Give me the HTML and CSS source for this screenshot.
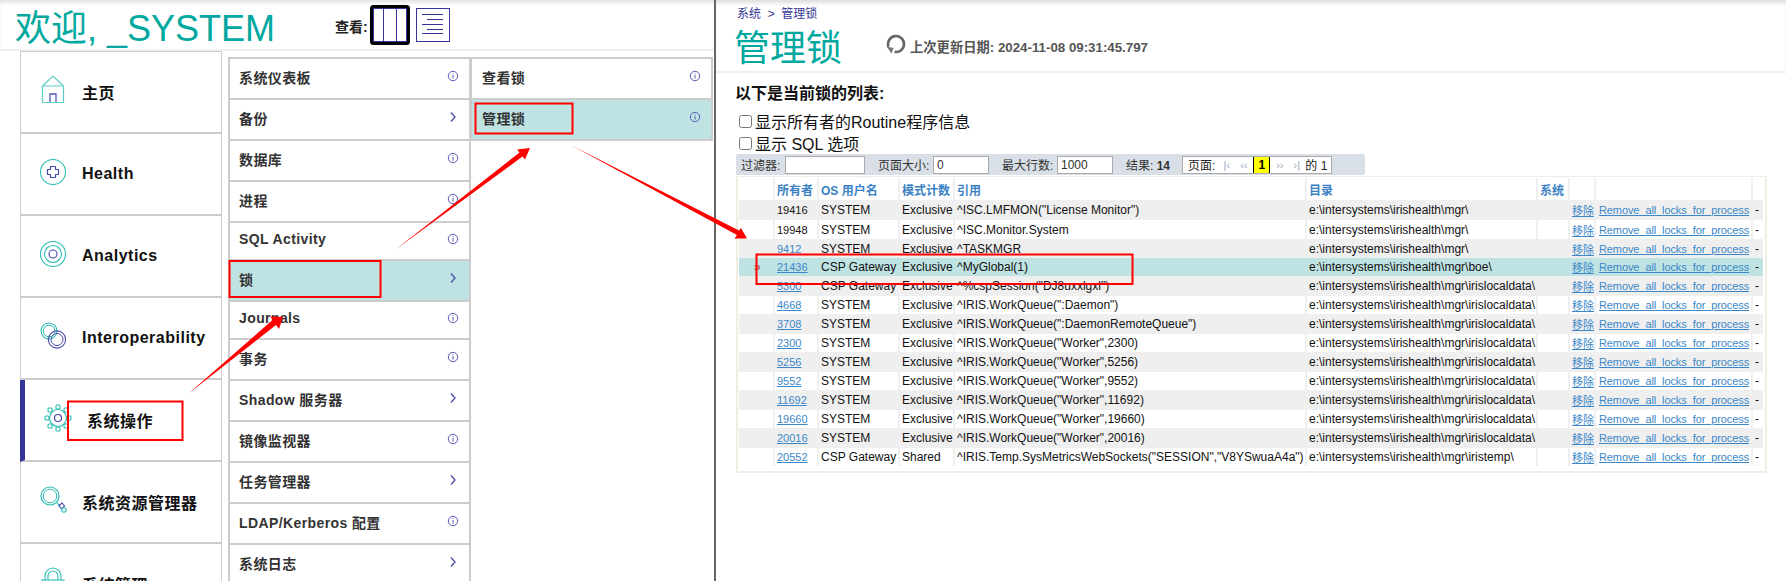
FILE: index.html
```html
<!DOCTYPE html>
<html lang="zh-CN">
<head>
    <meta charset="UTF-8">
    <title>管理锁</title>
    <link rel="stylesheet" href="styles.css">
</head>
<body>
<div class="page">
    <div class="portal">
        <div class="portal-head">
            <h1 class="welcome">欢迎, _SYSTEM</h1>
            <span class="view-label">查看:</span>
            <svg class="view-cols" width="40" height="40" viewBox="0 0 40 40">
                <rect x="1.5" y="1.5" width="37" height="37" rx="2" fill="#fff" stroke="#000" stroke-width="3"/>
                <rect x="3.5" y="3.5" width="33" height="33" fill="none" stroke="#333399"/>
                <path d="M13.5 4v32M26.5 4v32" stroke="#333399" fill="none"/>
            </svg>
            <svg class="view-rows" width="34" height="34" viewBox="0 0 34 34">
                <rect x=".5" y=".5" width="33" height="33" fill="#fff" stroke="#333399"/>
                <path d="M6 6.5h21M11 11.5h16M6 16.5h21M11 21.5h16M6 25.5h21" stroke="#333399" fill="none"/>
            </svg>
        </div>
        <div class="portal-body">
            <ul class="menu-main">
                <li class="main-item">
                    <svg class="main-icon" width="30" height="30" viewBox="0 0 30 30" fill="none">
                        <path d="M4 11.5 15 1 26 11.5M4.500 11h21v16.500h-21z" stroke="#5ccfc8" stroke-width="1.2"/>
                        <path d="M12 27v-8h6v8" stroke="#5555b5" stroke-width="1.3"/>
                    </svg>
                    <span>主页</span>
                </li>
                <li class="main-item">
                    <svg class="main-icon" width="30" height="30" viewBox="0 0 30 30" fill="none">
                        <circle cx="15" cy="15" r="12.500" stroke="#2cbdb5" stroke-width="1.1"/>
                        <path d="M12.500 9.500h5v3h3v5h-3v3h-5v-3h-3v-5h3z" stroke="#4a4aaa" stroke-width="1.2" stroke-linejoin="round"/>
                    </svg>
                    <span>Health</span>
                </li>
                <li class="main-item">
                    <svg class="main-icon" width="30" height="30" viewBox="0 0 30 30" fill="none">
                        <circle cx="15" cy="15" r="12.500" stroke="#2cbdb5" stroke-width="1.1"/>
                        <circle cx="15" cy="15" r="8.500" stroke="#2cbdb5" stroke-width="1.1"/>
                        <circle cx="15" cy="15" r="4" stroke="#4a4aaa" stroke-width="1.1"/>
                    </svg>
                    <span>Analytics</span>
                </li>
                <li class="main-item">
                    <svg class="main-icon" width="30" height="30" viewBox="0 0 30 30" fill="none">
                        <circle cx="11" cy="10" r="8" stroke="#2cbdb5" stroke-width="1.1"/>
                        <circle cx="11" cy="10" r="5.800" stroke="#2cbdb5" stroke-width="1"/>
                        <circle cx="19" cy="18.500" r="8.600" stroke="#4a4aaa" stroke-width="1.1"/>
                        <circle cx="19" cy="18.500" r="6" stroke="#4a4aaa" stroke-width="1"/>
                    </svg>
                    <span>Interoperability</span>
                </li>
                <li class="main-item main-active">
                    <svg class="main-icon" width="30" height="30" viewBox="0 0 30 30" fill="none">
                        <circle cx="15" cy="15" r="8.500" stroke="#2cbdb5" stroke-width="1.2"/>
                        <circle cx="15" cy="15" r="3.500" stroke="#4a4aaa" stroke-width="1.2"/>
                        <g fill="#fff" stroke="#2cbdb5" stroke-width="1.1">
                            <rect x="13" y="2" width="4" height="4" rx="1"/>
                            <rect x="13" y="24" width="4" height="4" rx="1"/>
                            <rect x="2" y="13" width="4" height="4" rx="1"/>
                            <rect x="24" y="13" width="4" height="4" rx="1"/>
                            <rect x="5" y="5" width="4" height="4" rx="1"/>
                            <rect x="21" y="5" width="4" height="4" rx="1"/>
                            <rect x="5" y="21" width="4" height="4" rx="1"/>
                            <rect x="21" y="21" width="4" height="4" rx="1"/>
                        </g>
                    </svg>
                    <span>系统操作</span>
                </li>
                <li class="main-item">
                    <svg class="main-icon" width="30" height="30" viewBox="0 0 30 30" fill="none">
                        <circle cx="12" cy="11" r="9" stroke="#2cbdb5" stroke-width="1.2"/>
                        <circle cx="12" cy="11" r="6.800" stroke="#2cbdb5" stroke-width="1"/>
                        <path d="M19 18 22 21" stroke="#2cbdb5" stroke-width="1.2"/>
                        <path d="M21 20.500 24 18l2.500 3-3 3z" stroke="#4a4aaa" stroke-width="1.1"/>
                        <circle cx="26" cy="25" r="2.200" stroke="#2cbdb5" stroke-width="1.1"/>
                    </svg>
                    <span>系统资源管理器</span>
                </li>
                <li class="main-item">
                    <svg class="main-icon" width="30" height="30" viewBox="0 0 30 30" fill="none">
                        <path d="M7 13V9a8 8 0 0 1 16 0v4M10 13V9a5 5 0 0 1 10 0v4" stroke="#2cbdb5" stroke-width="1.1"/>
                        <rect x="4" y="13" width="22" height="15" stroke="#2cbdb5" stroke-width="1.1"/>
                    </svg>
                    <span>系统管理</span>
                </li>
            </ul>
            <ul class="menu-sub">
                <li class="sub-item">系统仪表板<svg class="info"><use href="#i-info"/></svg></li>
                <li class="sub-item">备份<svg class="chev"><use href="#i-chev"/></svg></li>
                <li class="sub-item">数据库<svg class="info"><use href="#i-info"/></svg></li>
                <li class="sub-item">进程<svg class="info"><use href="#i-info"/></svg></li>
                <li class="sub-item sub-short">SQL Activity<svg class="info"><use href="#i-info"/></svg></li>
                <li class="sub-item sub-active">锁<svg class="chev"><use href="#i-chev"/></svg></li>
                <li class="sub-item sub-short">Journals<svg class="info"><use href="#i-info"/></svg></li>
                <li class="sub-item">事务<svg class="info"><use href="#i-info"/></svg></li>
                <li class="sub-item">Shadow 服务器<svg class="chev"><use href="#i-chev"/></svg></li>
                <li class="sub-item">镜像监视器<svg class="info"><use href="#i-info"/></svg></li>
                <li class="sub-item">任务管理器<svg class="chev"><use href="#i-chev"/></svg></li>
                <li class="sub-item">LDAP/Kerberos 配置<svg class="info"><use href="#i-info"/></svg></li>
                <li class="sub-item">系统日志<svg class="chev"><use href="#i-chev"/></svg></li>
            </ul>
            <ul class="menu-sub menu-third">
                <li class="sub-item">查看锁<svg class="info"><use href="#i-info"/></svg></li>
                <li class="sub-item sub-active">管理锁<svg class="info"><use href="#i-info"/></svg></li>
            </ul>
        </div>
    </div>

    <div class="panel">
        <div class="panel-head">
            <div class="crumbs">系统 &nbsp;&gt;&nbsp; 管理锁</div>
            <div class="title-row">
                <h1 class="panel-title">管理锁</h1>
                <svg class="refresh" width="22" height="20" viewBox="0 0 22 20" fill="none">
                    <path d="M9.600 17.900A8 8 0 1 0 3.500 12.700" stroke="#666" stroke-width="2.600"/>
                    <path d="M1.500 12.500 8.500 14 6.500 19.500z" fill="#777"/>
                </svg>
                <span class="updated">上次更新日期: 2024-11-08 09:31:45.797</span>
            </div>
        </div>
        <div class="panel-body">
            <h2 class="list-title">以下是当前锁的列表:</h2>
            <label class="check-row"><input type="checkbox">显示所有者的Routine程序信息</label>
            <label class="check-row"><input type="checkbox">显示 SQL 选项</label>
            <div class="filter-bar">
                <span class="fl-first">过滤器:</span><input class="fl-input fl-wide" type="text">
                <span class="fl-label">页面大小:</span><input class="fl-input" type="text" value="0">
                <span class="fl-label">最大行数:</span><input class="fl-input" type="text" value="1000">
                <span class="fl-label">结果: <b>14</b></span>
                <div class="pager">
                    <span class="pg-text">页面:</span>
                    <span class="pg-nav pg-a">|‹</span>
                    <span class="pg-nav">‹‹</span>
                    <span class="pg-cur">1</span>
                    <span class="pg-nav pg-c">››</span>
                    <span class="pg-nav">›|</span>
                    <span class="pg-text">的 1</span>
                </div>
            </div>
            <div class="table-box">
                <table class="locks">
                    <colgroup>
                        <col class="c-mark"><col class="c-owner"><col class="c-user"><col class="c-mode">
                        <col class="c-ref"><col class="c-dir"><col class="c-sys"><col class="c-rm">
                        <col class="c-rmall"><col class="c-end">
                    </colgroup>
                    <thead>
                        <tr><th></th><th>所有者</th><th>OS 用户名</th><th>模式计数</th><th>引用</th><th>目录</th><th>系统</th><th></th><th></th><th></th></tr>
                    </thead>
                    <tbody>
                        <tr class="r-odd"><td></td><td class="num">19416</td><td>SYSTEM</td><td>Exclusive</td><td>^ISC.LMFMON("License Monitor")</td><td>e:\intersystems\irishealth\mgr\</td><td></td><td class="rm"><a href="#">移除</a></td><td><a class="rm-all" href="#">Remove_all_locks_for_process</a></td><td>-</td></tr>
                        <tr class="r-tall"><td></td><td class="num">19948</td><td>SYSTEM</td><td>Exclusive</td><td>^ISC.Monitor.System</td><td>e:\intersystems\irishealth\mgr\</td><td></td><td class="rm"><a href="#">移除</a></td><td><a class="rm-all" href="#">Remove_all_locks_for_process</a></td><td>-</td></tr>
                        <tr class="r-gray"><td></td><td class="num"><a href="#">9412</a></td><td>SYSTEM</td><td>Exclusive</td><td>^TASKMGR</td><td>e:\intersystems\irishealth\mgr\</td><td></td><td class="rm"><a href="#">移除</a></td><td><a class="rm-all" href="#">Remove_all_locks_for_process</a></td><td>-</td></tr>
                        <tr class="r-sel"><td class="mark">»</td><td class="num"><a href="#">21436</a></td><td>CSP Gateway</td><td>Exclusive</td><td>^MyGlobal(1)</td><td>e:\intersystems\irishealth\mgr\boe\</td><td></td><td class="rm"><a href="#">移除</a></td><td><a class="rm-all" href="#">Remove_all_locks_for_process</a></td><td>-</td></tr>
                        <tr class="r-odd"><td></td><td class="num"><a href="#">5300</a></td><td>CSP Gateway</td><td>Exclusive</td><td>^%cspSession("DJ8uxxlgxl")</td><td>e:\intersystems\irishealth\mgr\irislocaldata\</td><td></td><td class="rm"><a href="#">移除</a></td><td><a class="rm-all" href="#">Remove_all_locks_for_process</a></td><td>-</td></tr>
                        <tr><td></td><td class="num"><a href="#">4668</a></td><td>SYSTEM</td><td>Exclusive</td><td>^IRIS.WorkQueue(":Daemon")</td><td>e:\intersystems\irishealth\mgr\irislocaldata\</td><td></td><td class="rm"><a href="#">移除</a></td><td><a class="rm-all" href="#">Remove_all_locks_for_process</a></td><td>-</td></tr>
                        <tr class="r-odd"><td></td><td class="num"><a href="#">3708</a></td><td>SYSTEM</td><td>Exclusive</td><td>^IRIS.WorkQueue(":DaemonRemoteQueue")</td><td>e:\intersystems\irishealth\mgr\irislocaldata\</td><td></td><td class="rm"><a href="#">移除</a></td><td><a class="rm-all" href="#">Remove_all_locks_for_process</a></td><td>-</td></tr>
                        <tr><td></td><td class="num"><a href="#">2300</a></td><td>SYSTEM</td><td>Exclusive</td><td>^IRIS.WorkQueue("Worker",2300)</td><td>e:\intersystems\irishealth\mgr\irislocaldata\</td><td></td><td class="rm"><a href="#">移除</a></td><td><a class="rm-all" href="#">Remove_all_locks_for_process</a></td><td>-</td></tr>
                        <tr class="r-odd"><td></td><td class="num"><a href="#">5256</a></td><td>SYSTEM</td><td>Exclusive</td><td>^IRIS.WorkQueue("Worker",5256)</td><td>e:\intersystems\irishealth\mgr\irislocaldata\</td><td></td><td class="rm"><a href="#">移除</a></td><td><a class="rm-all" href="#">Remove_all_locks_for_process</a></td><td>-</td></tr>
                        <tr><td></td><td class="num"><a href="#">9552</a></td><td>SYSTEM</td><td>Exclusive</td><td>^IRIS.WorkQueue("Worker",9552)</td><td>e:\intersystems\irishealth\mgr\irislocaldata\</td><td></td><td class="rm"><a href="#">移除</a></td><td><a class="rm-all" href="#">Remove_all_locks_for_process</a></td><td>-</td></tr>
                        <tr class="r-odd"><td></td><td class="num"><a href="#">11692</a></td><td>SYSTEM</td><td>Exclusive</td><td>^IRIS.WorkQueue("Worker",11692)</td><td>e:\intersystems\irishealth\mgr\irislocaldata\</td><td></td><td class="rm"><a href="#">移除</a></td><td><a class="rm-all" href="#">Remove_all_locks_for_process</a></td><td>-</td></tr>
                        <tr><td></td><td class="num"><a href="#">19660</a></td><td>SYSTEM</td><td>Exclusive</td><td>^IRIS.WorkQueue("Worker",19660)</td><td>e:\intersystems\irishealth\mgr\irislocaldata\</td><td></td><td class="rm"><a href="#">移除</a></td><td><a class="rm-all" href="#">Remove_all_locks_for_process</a></td><td>-</td></tr>
                        <tr class="r-odd"><td></td><td class="num"><a href="#">20016</a></td><td>SYSTEM</td><td>Exclusive</td><td>^IRIS.WorkQueue("Worker",20016)</td><td>e:\intersystems\irishealth\mgr\irislocaldata\</td><td></td><td class="rm"><a href="#">移除</a></td><td><a class="rm-all" href="#">Remove_all_locks_for_process</a></td><td>-</td></tr>
                        <tr><td></td><td class="num"><a href="#">20552</a></td><td>CSP Gateway</td><td>Shared</td><td>^IRIS.Temp.SysMetricsWebSockets("SESSION","V8YSwuaA4a")</td><td>e:\intersystems\irishealth\mgr\iristemp\</td><td></td><td class="rm"><a href="#">移除</a></td><td><a class="rm-all" href="#">Remove_all_locks_for_process</a></td><td>-</td></tr>
                    </tbody>
                </table>
            </div>
        </div>
    </div>

    <!-- red marks drawn on top of the screenshot -->
    <svg class="marks" width="1786" height="581" viewBox="0 0 1786 581">
        <g fill="none" stroke="#f00" stroke-width="2">
            <rect x="68" y="401.500" width="114.500" height="38.500"/>
            <rect x="229.500" y="261" width="151" height="36"/>
            <rect x="475.500" y="103.500" width="97" height="30"/>
            <rect x="756.500" y="254.500" width="376" height="29.500"/>
        </g>
        <g fill="#f00">
            <polygon points="188,394 273,319.500 270,316.500 283,317 279,329 276,325"/>
            <polygon points="395,250 519.500,152.500 517,149.500 530,148 525,159.500 522.500,156.500"/>
            <polygon points="570.700,145 739,230.500 741,228 747,238.500 734.500,238.500 737,235"/>
        </g>
    </svg>
</div>

<svg class="defs" width="0" height="0">
    <symbol id="i-info" viewBox="0 0 12 12">
        <circle cx="6" cy="6" r="4.700" fill="none" stroke="#5a5ab5" stroke-width="1"/>
        <path d="M6 3.200v.9M6 5v3.600" stroke="#5a5ab5" stroke-width="1" fill="none"/>
    </symbol>
    <symbol id="i-chev" viewBox="0 0 12 12">
        <path d="M4 1.500 8 6 4 10.500" fill="none" stroke="#4a4aa5" stroke-width="1.300"/>
    </symbol>
</svg>
</body>
</html>
```

FILE: styles.css
```css
* {
    box-sizing: border-box;
}
html, body {
    margin: 0;
    padding: 0;
    background: #fff;
}
body {
    font-family: "Liberation Sans", "Noto Sans CJK SC", sans-serif;
}
ul {
    list-style: none;
    margin: 0;
    padding: 0;
}
.defs {
    position: absolute;
}
.page {
    position: relative;
    display: flex;
    width: 1786px;
    height: 581px;
    overflow: hidden;
}
.marks {
    position: absolute;
    left: 0;
    top: 0;
    pointer-events: none;
}

/* left side: portal menu */
.portal {
    width: 714px;
    flex: none;
}
.portal-head {
    display: flex;
    align-items: center;
    height: 51px;
    border-bottom: 2px solid #eee;
    box-shadow: inset 0 4px 4px -2px #ddd;
    padding-left: 15px;
}
.welcome {
    width: 320px;
    margin: 0;
    font-size: 36px;
    font-weight: normal;
    color: #00a8a0;
    white-space: nowrap;
}
.view-label {
    width: 35px;
    font-size: 14px;
    font-weight: bold;
    color: #222;
    padding-top: 3px;
}
.view-rows {
    margin-left: 6px;
}
.portal-body {
    display: flex;
    align-items: flex-start;
    padding-left: 20px;
}
.menu-main {
    width: 202px;
    margin-right: 6px;
    border-top: 1px solid #ccc;
}
.main-item {
    display: flex;
    align-items: center;
    height: 82px;
    padding-left: 17px;
    border-left: 1px solid #ccc;
    border-right: 1px solid #ccc;
    border-bottom: 2px solid #ccc;
    font-size: 16px;
    font-weight: bold;
    color: #111;
    letter-spacing: .5px;
}
.main-item span {
    margin-left: 14px;
    white-space: nowrap;
}
.main-icon {
    flex: none;
    margin-bottom: 4px;
}
.main-active {
    border-left: 5px solid #333399;
    padding-left: 18px;
}
.menu-sub {
    width: 243px;
    margin-top: 6px;
    border-top: 2px solid #ccc;
    border-left: 2px solid #ccc;
    border-right: 2px solid #ccc;
}
.menu-third {
    width: 242px;
    border-left: 1px solid #ccc;
}
.sub-item {
    display: flex;
    align-items: center;
    height: 41px;
    padding: 0 0 4px 9px;
    border-bottom: 2px solid #ccc;
    font-size: 14px;
    font-weight: bold;
    color: #333;
    letter-spacing: .4px;
}
.menu-third .sub-item {
    padding-left: 10px;
}
.sub-short {
    height: 38px;
}
.sub-active {
    background: #bfe3e3;
}
.info, .chev {
    width: 12px;
    height: 12px;
    margin: 0 10px 1px auto;
    flex: none;
}

/* right side: lock page */
.panel {
    flex: 1;
    border-left: 2px solid #666;
}
.panel-head {
    height: 73px;
    border-bottom: 2px solid #eee;
    box-shadow: inset 0 5px 4px -2px #ddd;
    padding-left: 18px;
}
.crumbs {
    padding: 4px 0 0 3px;
    height: 24px;
    font-size: 12px;
    color: #333695;
}
.title-row {
    display: flex;
    align-items: center;
    height: 47px;
}
.panel-title {
    width: 151px;
    margin: 0;
    font-size: 36px;
    font-weight: normal;
    color: #00a8a0;
    padding-bottom: 6px;
}
.refresh {
    margin-bottom: 7px;
}
.updated {
    margin: 0 0 2px 3px;
    font-size: 13.300px;
    font-weight: bold;
    color: #555;
}
.panel-body {
    padding-left: 20px;
}
.list-title {
    margin: 11px 0 0 -1px;
    height: 26px;
    font-size: 16px;
    line-height: 20px;
    font-weight: bold;
    color: #111;
}
.check-row {
    display: flex;
    align-items: center;
    height: 22px;
    padding-left: 3px;
    font-size: 16px;
    color: #111;
}
.check-row input {
    width: 13px;
    height: 13px;
    margin: 0 3px 0 0;
}
.filter-bar {
    display: flex;
    align-items: center;
    width: 629px;
    height: 21px;
    padding-left: 5px;
    background: #d9dfe6;
    border-radius: 2px;
    font-size: 12px;
    color: #333;
}
.fl-first {
    width: 44px;
}
.fl-label {
    margin-left: 13px;
    width: 55px;
    white-space: nowrap;
}
.fl-input {
    width: 56px;
    height: 18px;
    padding: 0 3px;
    border: 1px solid #aaa;
    font: 12px "Liberation Sans", sans-serif;
    color: #333;
}
.fl-wide {
    width: 80px;
}
.pager {
    display: flex;
    align-items: center;
    width: 150px;
    height: 18px;
    margin-left: 1px;
    padding-left: 5px;
    background: #fff;
    border: 1px solid #aaa;
    color: #222;
}
.pg-text {
    flex: none;
    white-space: nowrap;
}
.pg-nav {
    flex: none;
    width: 17px;
    color: #9aa6c0;
    font-size: 11px;
    text-align: center;
}
.pg-a {
    margin-left: 3px;
}
.pg-cur {
    flex: none;
    width: 17px;
    height: 16px;
    margin-left: 1px;
    line-height: 16px;
    text-align: center;
    background: #ffff00;
    border-left: 1px solid #000;
    border-right: 1px solid #000;
    font-weight: bold;
    color: #000;
}
.pg-c {
    margin-left: 1px;
}
.table-box {
    width: 1031px;
    height: 297px;
    margin-top: 1px;
    padding: 1px 3px 0 1px;
    border: 2px solid #eeeee2;
    border-top-width: 1px;
}
.locks {
    width: 1024px;
    table-layout: fixed;
    border-collapse: collapse;
    font-size: 12px;
    color: #111;
}
.c-mark { width: 35px; }
.c-owner { width: 44px; }
.c-user { width: 81px; }
.c-mode { width: 55px; }
.c-ref { width: 352px; }
.c-dir { width: 231px; }
.c-sys { width: 32px; }
.c-rm { width: 26px; }
.c-rmall { width: 157px; }
.c-end { width: 11px; }
.locks th {
    height: 22px;
    padding: 0 0 0 2px;
    border-right: 2px solid #f0f0f0;
    text-align: left;
    font-size: 12px;
    font-weight: bold;
    color: #3b82c4;
    white-space: nowrap;
}
.locks td {
    height: 18px;
    padding: 0 0 0 2px;
    border-right: 2px solid #f0f0f0;
    white-space: nowrap;
    overflow: hidden;
}
.locks th:last-child, .locks td:last-child {
    border-right: none;
}
.locks a {
    color: #3b87c8;
}
.locks .num {
    font-size: 11px;
}
.locks .rm {
    padding-left: 2px;
    font-size: 11px;
}
.locks .r-odd td, .locks .r-gray td {
    background: #efefef;
    border-right-color: #efefef;
}
.locks .r-odd td {
    height: 20px;
}
.locks .r-gray td, .locks .r-tall td {
    height: 19px;
}
.locks .r-sel td {
    background: #bfe3e3;
    border-right-color: #bfe3e3;
}
.locks .mark {
    padding-left: 15px;
    color: #a33;
}
.rm-all {
    margin-left: 1px;
    font-size: 11px;
    letter-spacing: -.1px;
}
```
